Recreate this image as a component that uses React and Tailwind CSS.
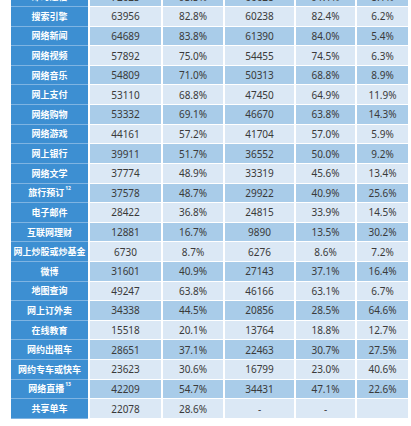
const rows = [
  ['即时通信', '72023', '93.3%', '66628', '91.1%', '8.1%'],
  ['搜索引擎', '63956', '82.8%', '60238', '82.4%', '6.2%'],
  ['网络新闻', '64689', '83.8%', '61390', '84.0%', '5.4%'],
  ['网络视频', '57892', '75.0%', '54455', '74.5%', '6.3%'],
  ['网络音乐', '54809', '71.0%', '50313', '68.8%', '8.9%'],
  ['网上支付', '53110', '68.8%', '47450', '64.9%', '11.9%'],
  ['网络购物', '53332', '69.1%', '46670', '63.8%', '14.3%'],
  ['网络游戏', '44161', '57.2%', '41704', '57.0%', '5.9%'],
  ['网上银行', '39911', '51.7%', '36552', '50.0%', '9.2%'],
  ['网络文学', '37774', '48.9%', '33319', '45.6%', '13.4%'],
  ['旅行预订', '37578', '48.7%', '29922', '40.9%', '25.6%', '12'],
  ['电子邮件', '28422', '36.8%', '24815', '33.9%', '14.5%'],
  ['互联网理财', '12881', '16.7%', '9890', '13.5%', '30.2%'],
  ['网上炒股或炒基金', '6730', '8.7%', '6276', '8.6%', '7.2%'],
  ['微博', '31601', '40.9%', '27143', '37.1%', '16.4%'],
  ['地图查询', '49247', '63.8%', '46166', '63.1%', '6.7%'],
  ['网上订外卖', '34338', '44.5%', '20856', '28.5%', '64.6%'],
  ['在线教育', '15518', '20.1%', '13764', '18.8%', '12.7%'],
  ['网约出租车', '28651', '37.1%', '22463', '30.7%', '27.5%'],
  ['网约专车或快车', '23623', '30.6%', '16799', '23.0%', '40.6%'],
  ['网络直播', '42209', '54.7%', '34431', '47.1%', '22.6%', '13'],
  ['共享单车', '22078', '28.6%', '-', '-', ''],
];

export default function App() {
  return (
    <div
      className="w-[411px] h-[426px] overflow-hidden bg-white"
      style={{ fontFamily: '"Noto Sans", "Noto Sans CJK SC", sans-serif' }}
    >
      <div className="ml-[11px] mt-[-12.6px] grid grid-cols-[77px_71px_60px_69px_59px_51px] gap-x-[2px]">
        {rows.map((r, i) => {
          const dark = i % 2 === 0;
          const cell = dark ? 'bg-[#a9cce9]' : 'bg-[#dbe8f5]';
          return [
            <div
              key={`l${i}`}
              className="h-[19.62px] bg-[#3d8fd2] border-b border-[#7fb4e2] flex items-center justify-center text-white font-bold text-[9px] leading-none whitespace-nowrap"
            >
              {r[0]}
              {r[6] && <sup className="text-[5px] ml-[1px] -mt-[4px]">{r[6]}</sup>}
            </div>,
            ...r.slice(1, 6).map((v, j) => (
              <div
                key={`c${i}-${j}`}
                className={`h-[19.62px] ${cell} border-b border-white flex items-center justify-center text-[10px] text-[#3a3a3a] leading-none`}
              >
                {v}
              </div>
            )),
          ];
        })}
      </div>
    </div>
  );
}
